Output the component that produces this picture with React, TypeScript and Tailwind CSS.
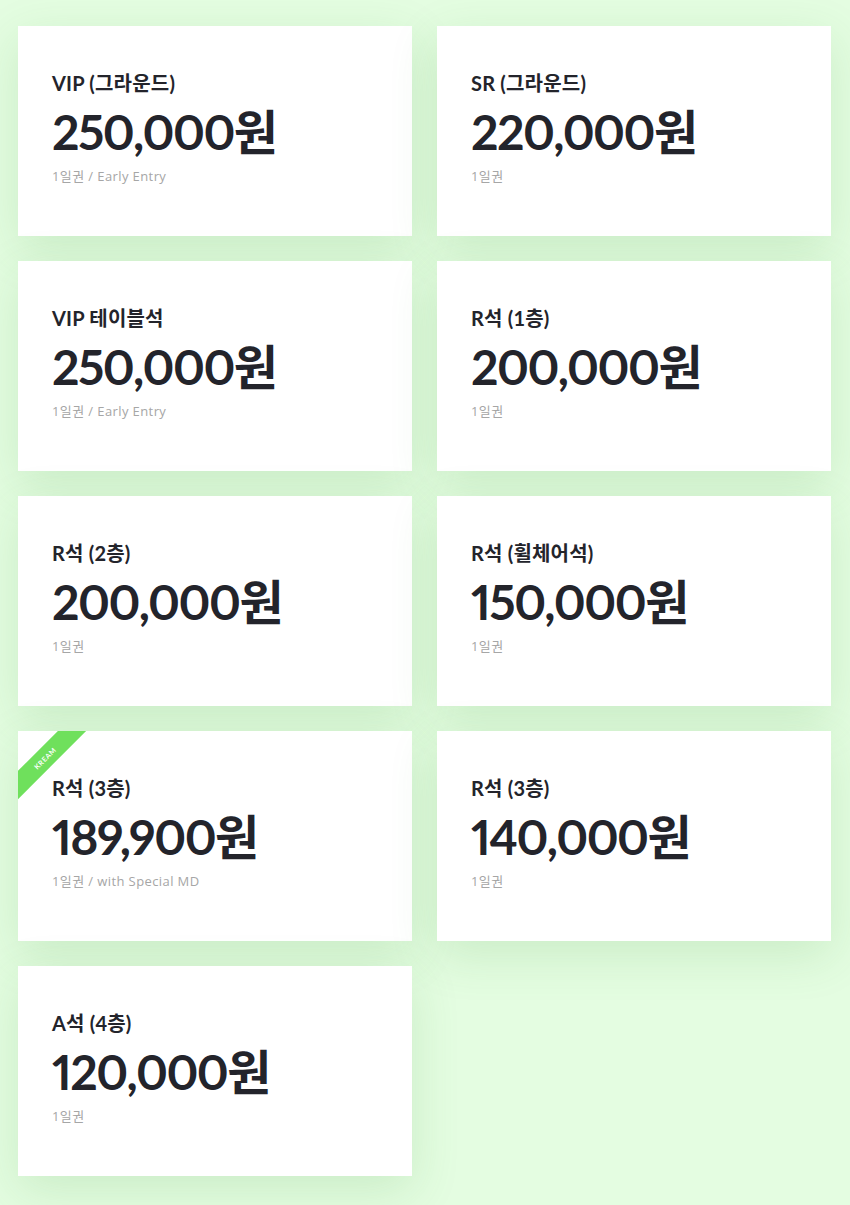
const tickets = [
  { name: "VIP (그라운드)", price: "250,000원", note: "1일권 / Early Entry" },
  { name: "SR (그라운드)", price: "220,000원", note: "1일권" },
  { name: "VIP 테이블석", price: "250,000원", note: "1일권 / Early Entry" },
  { name: "R석 (1층)", price: "200,000원", note: "1일권" },
  { name: "R석 (2층)", price: "200,000원", note: "1일권" },
  { name: "R석 (휠체어석)", price: "150,000원", note: "1일권" },
  { name: "R석 (3층)", price: "189,900원", note: "1일권 / with Special MD", kream: true },
  { name: "R석 (3층)", price: "140,000원", note: "1일권" },
  { name: "A석 (4층)", price: "120,000원", note: "1일권" },
];

const TicketCard = ({ name, price, note, kream }: { name: string; price: string; note: string; kream?: boolean }) => (
  <div className="relative h-[210px] overflow-hidden bg-white px-[34px] pt-[45px] shadow-[0_14px_45px_rgba(70,150,60,0.16)]">
    {kream && (
      <div className="absolute left-[-33px] top-[17px] flex h-[20px] w-[120px] -rotate-45 items-center justify-center bg-[#6fe05c]">
        <span className="text-[7px] font-bold tracking-[0.6px] text-white font-['Lato',sans-serif]">KREAM</span>
      </div>
    )}
    <h3 className="text-[20px] font-bold leading-[24px] text-[#23242b] tracking-[0.2px] font-['Lato','Noto_Sans_CJK_KR',sans-serif]">
      {name}
    </h3>
    <p className="mt-[9px] text-[48px] font-bold leading-[56px] text-[#23242b] tracking-[-1.5px] proportional-nums font-['Lato','Noto_Sans_CJK_KR',sans-serif]">
      {price}
    </p>
    <p className="mt-[8px] text-[13px] leading-[16px] text-[#a6a6a6] tracking-[0.4px] font-['Open_Sans','Noto_Sans_CJK_KR',sans-serif]">
      {note}
    </p>
  </div>
);

export default function App() {
  return (
    <div className="min-h-[1205px] bg-[#e4fde1] pl-[18px] pr-[19px] pt-[26px] pb-[28px]">
      <div className="grid grid-cols-2 gap-[25px]">
        {tickets.map((t, i) => (
          <TicketCard key={i} {...t} />
        ))}
      </div>
    </div>
  );
}
